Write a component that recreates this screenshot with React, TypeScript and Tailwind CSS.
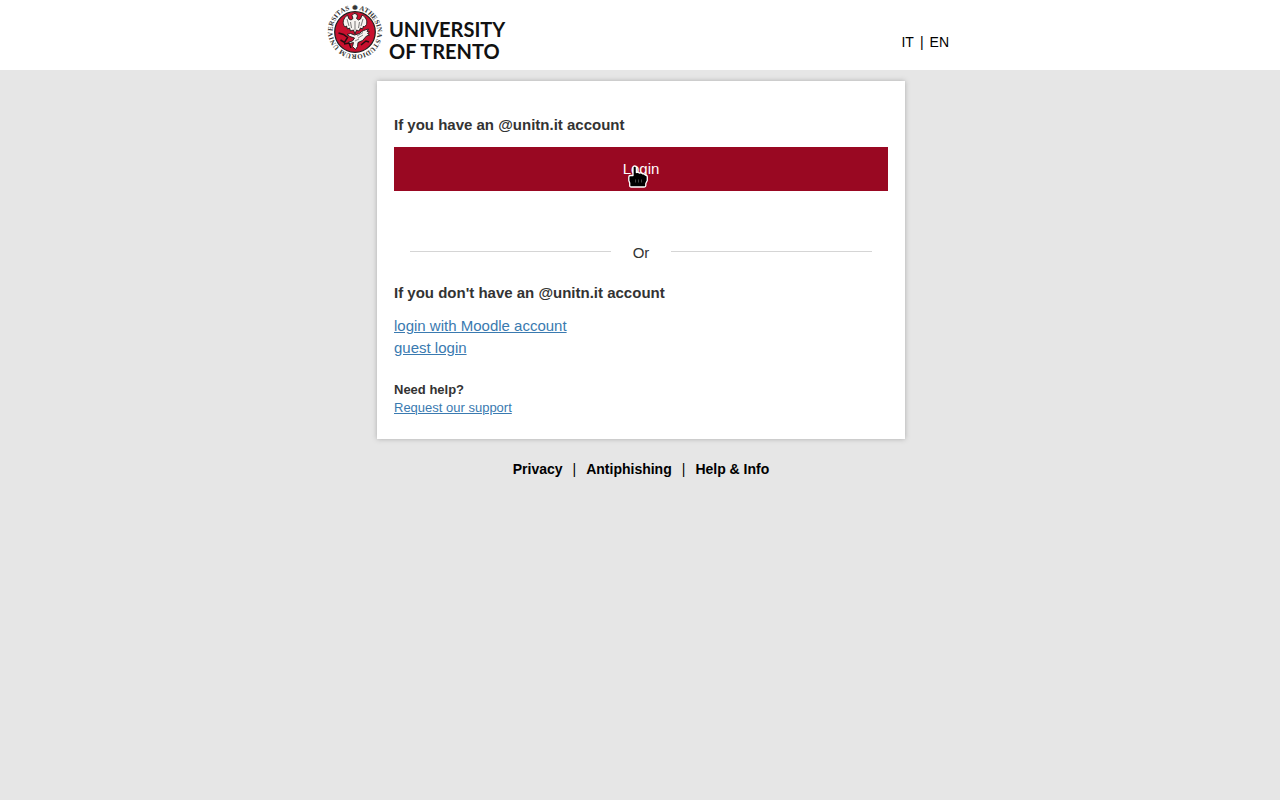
import React from "react";

function Seal() {
  return (
    <svg viewBox="0 0 56 56" className="h-14 w-14 shrink-0" role="img" aria-label="University seal">
      <defs>
        <path id="ring" d="M12.600 43.400A21.800 21.800 0 1 1 43.400 12.600A21.800 21.800 0 1 1 12.600 43.400" />
      </defs>
      <circle cx="28" cy="28" r="20.300" fill="#c8102e" stroke="#1c1c1c" strokeWidth="1.200" />
      <text fontFamily="Liberation Serif, serif" fontSize="7" fontWeight="700" fill="#333">
        <textPath href="#ring">UNIVERSITAS ✹ ATHESINA STUDIORUM</textPath>
      </text>
      {/* eagle, heraldic */}
      <path
        d="M27 9.500l2.500.5 1 2-1 2.500 2 1.500 2-1 1.500-4c4 2 5.500 6 4.500 9.500l-2 2.500-1-1-1 3-2-1-1.500 3-2.500-1-1.500 4-1.500-4-3 1-1-3-2 1-1-3-1.500 1c-3.500-4-1.500-9 2.500-12l1.500 4 2 1 2-1.500-1-3z"
        fill="#f7f3f1"
        stroke="#1a1a1a"
        strokeWidth="0.900"
      />
      <path d="M20 15l2 7M23.500 18l1 6M36 15l-2 7M32.500 18l-1 6M28 17v9" stroke="#444" strokeWidth="0.700" fill="none" />
      {/* winged figure over the flame */}
      <path
        d="M41.500 25c-4 1-7 2-9 4.500l-5 1.500-4-1.500-3.500 1 3 2 4.500 1.500-2 3-4 1 1 1.500 4-1-1 4 3 3 2-3 .5-4 4.500-2 4-4.500 3-1-2-1.500 2-1.500-2.500-.5z"
        fill="#f7f3f1"
        stroke="#1a1a1a"
        strokeWidth="0.900"
      />
      <path d="M30 32l6-3.500M31 34l5-3M28 37l4-2" stroke="#555" strokeWidth="0.700" />
      <path d="M11.500 29l5 1.500 4 3-3 5-4-2.500M17 40l5-1 2 5M34 41l5-4 3 1" stroke="#2a0b10" strokeWidth="1.500" fill="none" />
    </svg>
  );
}

function Cursor() {
  return (
    <svg viewBox="0 0 20 23" className="pointer-events-none absolute left-1/2 top-[18px] -ml-[13px] h-[23px] w-5" aria-hidden="true">
      <path
        d="M5 2.500Q5 1 6.700 1T8.400 2.500V7.500Q10.500 6.700 11.500 8.200Q13.500 7.400 14.700 8.900Q16.500 8.600 17.200 10Q19.300 10 19.300 12V15.500L17.800 18.500V20.500Q17.800 22 16.300 22H3.200Q1.700 22 1.700 20.500V18L.8 15.500V12Q.8 10.500 2.500 10.500H5Z"
        fill="#000"
        stroke="#fff"
        strokeWidth="1.300"
        strokeLinejoin="round"
      />
      <path d="M7.500 14.500v3M10.500 14.500v3M13.500 14.500v3" stroke="#555" strokeWidth="0.800" />
    </svg>
  );
}

export default function App() {
  return (
    <div className="min-h-screen bg-[#e6e6e6] font-['Liberation_Sans',Arial,sans-serif] text-[#333]">
      <header className="bg-white">
        <div className="mx-auto flex h-[70px] max-w-[626px] items-start justify-between">
          <a href="#" className="flex items-start gap-1.5 pt-1 text-[#111]">
            <Seal />
            <span className="flex flex-col pt-3.5 font-['Lato',sans-serif] text-[20px] font-bold leading-[22px]">
              <span>UNIVERSITY</span>
              <span>OF TRENTO</span>
            </span>
          </a>
          <nav className="flex gap-1.5 pr-1 pt-8 text-sm text-black" aria-label="Language">
            <a href="#">IT</a>
            <span>|</span>
            <a href="#">EN</a>
          </nav>
        </div>
      </header>
      <div className="pl-0.5 pt-[11px]">
        <main className="mx-auto max-w-[528px] bg-white px-[17px] pb-[22px] pt-8 shadow-[0_0_5px_#aaa]">
          <h2 className="text-[15px] font-bold leading-6">If you have an @unitn.it account</h2>
          <div className="relative mt-2.5">
            <button type="button" className="h-11 w-full bg-[#990822] text-[15px] text-white">
              Login
            </button>
            <Cursor />
          </div>
          <div className="mt-[50px] flex items-start gap-[22px] px-4 text-[15px] leading-6">
            <span className="mt-2.5 h-px flex-1 bg-[#d5d5d5]" />
            <span>Or</span>
            <span className="mt-2.5 h-px flex-1 bg-[#d5d5d5]" />
          </div>
          <h2 className="mt-4 text-[15px] font-bold leading-6">If you don't have an @unitn.it account</h2>
          <div className="mt-2.5 flex flex-col items-start text-[15px] leading-[22px] text-[#3a7ab0]">
            <a href="#" className="underline">login with Moodle account</a>
            <a href="#" className="underline">guest login</a>
          </div>
          <p className="mt-[22px] text-[13px] font-bold leading-[18px]">Need help?</p>
          <a href="#" className="block w-fit text-[13px] leading-[18px] text-[#3a7ab0] underline">
            Request our support
          </a>
        </main>
        <footer className="mt-5 flex justify-center gap-2.5 text-sm font-bold text-black">
          <a href="#">Privacy</a>
          <span className="font-normal">|</span>
          <a href="#">Antiphishing</a>
          <span className="font-normal">|</span>
          <a href="#">Help &amp; Info</a>
        </footer>
      </div>
    </div>
  );
}
